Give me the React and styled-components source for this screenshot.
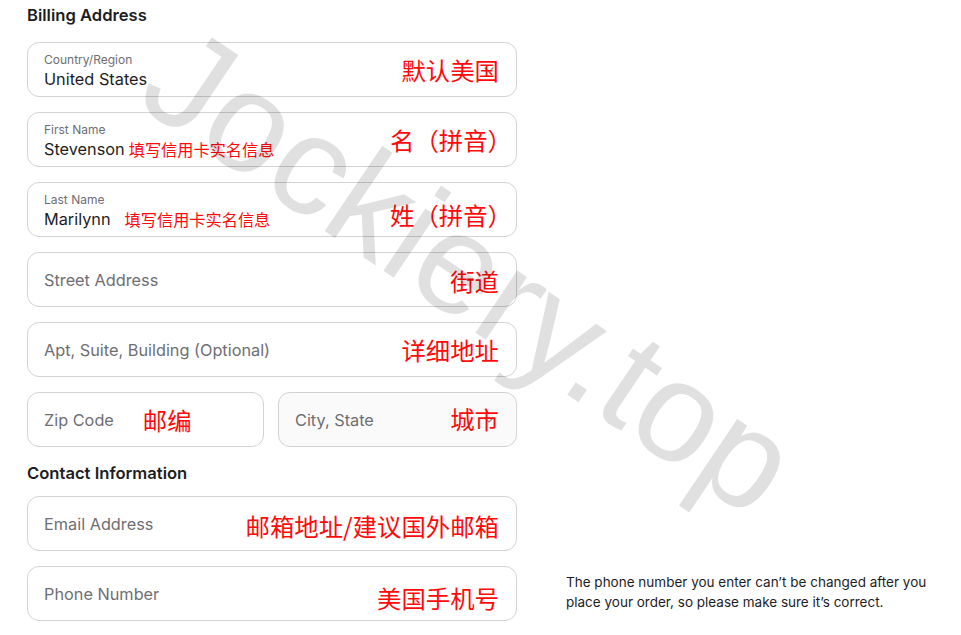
import React from 'react'
import styled, { createGlobalStyle } from 'styled-components'

const GlobalStyle = createGlobalStyle`
body {
    margin: 0;
    background: #fff;
    font-family: Inter, "Liberation Sans", sans-serif;
    color: #1d1d1f;
}
`

const Chevron = () => (
    <ChevronSvg viewBox="0 0 10 6" width="10" height="6">
        <path d="M1 1l4 4 4-4" fill="none" stroke="#86868b" strokeWidth="1.3" strokeLinecap="round" strokeLinejoin="round" />
    </ChevronSvg>
)

const App = () => {
    return (
        <Page>
            <GlobalStyle />
            <Title $after={16}>Billing Address</Title>
            <Stack>
                <Field>
                    <Content>
                        <Label>Country/Region</Label>
                        <Value>United States</Value>
                    </Content>
                    <Chevron />
                    <Note>默认美国</Note>
                </Field>
                <Field>
                    <Content>
                        <Label>First Name</Label>
                        <Value>Stevenson<SmallNote $gap={4}>填写信用卡实名信息</SmallNote></Value>
                    </Content>
                    <Note $dy={0} $tight>名（拼音）</Note>
                </Field>
                <Field>
                    <Content>
                        <Label>Last Name</Label>
                        <Value>Marilynn<SmallNote $gap={14}>填写信用卡实名信息</SmallNote></Value>
                    </Content>
                    <Note $dy={5} $tight>姓（拼音）</Note>
                </Field>
                <Field>
                    <Placeholder>Street Address</Placeholder>
                    <Note $dy={1}>街道</Note>
                </Field>
                <Field>
                    <Placeholder>Apt, Suite, Building (Optional)</Placeholder>
                    <Note>详细地址</Note>
                </Field>
                <Pair>
                    <Field>
                        <Placeholder>Zip Code</Placeholder>
                        <Note $inline>邮编</Note>
                    </Field>
                    <Field $muted>
                        <Placeholder>City, State</Placeholder>
                        <Chevron />
                        <Note $dy={-1}>城市</Note>
                    </Field>
                </Pair>
            </Stack>

            <Title $before={15} $after={12}>Contact Information</Title>
            <Stack>
                <Row>
                    <Field>
                        <Placeholder>Email Address</Placeholder>
                        <Note $dy={2}>邮箱地址/建议国外邮箱</Note>
                    </Field>
                </Row>
                <Row>
                    <Field>
                        <Placeholder>Phone Number</Placeholder>
                        <Note $dy={4}>美国手机号</Note>
                    </Field>
                    <Aside>The phone number you enter can’t be changed after you place your order, so please make sure it’s correct.</Aside>
                </Row>
            </Stack>

            <Watermark>Jockiery.top</Watermark>
        </Page>
    )
}

export default App


const Page = styled.div`
position: relative;
box-sizing: border-box;
min-height: 635px;
padding: 4px 27px 0;
`
const Title = styled.h2`
margin: ${({ $before }) => $before || 0}px 0 ${({ $after }) => $after || 0}px;
font-size: 16.6px;
line-height: 22px;
font-weight: 600;
color: #1d1d1f;
`
const Stack = styled.div`
display: flex;
flex-direction: column;
gap: 15px;
`
const Row = styled.div`
display: grid;
grid-template-columns: 490px 370px;
column-gap: 49px;
align-items: center;
`
const Pair = styled.div`
display: grid;
grid-template-columns: 237px 239px;
column-gap: 14px;
width: 490px;
`
const Field = styled.div`
position: relative;
box-sizing: border-box;
width: 100%;
max-width: 490px;
height: 55px;
display: flex;
align-items: center;
padding: 0 17px 0 16px;
border: 1px solid #d2d2d7;
border-radius: 12px;
background: ${({ $muted }) => $muted ? '#fafafa' : '#fff'};
`
const Content = styled.div`
flex: 1;
display: flex;
flex-direction: column;
justify-content: center;
padding-top: 2px;
`
const Label = styled.div`
font-size: 12px;
line-height: 16px;
color: #6e6e73;
`
const Value = styled.div`
display: flex;
align-items: center;
font-size: 16.3px;
line-height: 22px;
color: #1d1d1f;
`
const Placeholder = styled.div`
font-size: 16.3px;
line-height: 22px;
color: #6e6e73;
`
const Note = styled.span`
position: relative;
margin-left: ${({ $inline }) => $inline ? '29px' : 'auto'};
margin-right: ${({ $tight }) => $tight ? '-13px' : '0'};
transform: translateY(${({ $dy }) => $dy || 0}px);
font-family: "Noto Sans CJK SC", sans-serif;
font-size: 24.4px;
line-height: 30px;
color: #ff0a0a;
`
const SmallNote = styled.span`
margin-left: ${({ $gap }) => $gap}px;
font-family: "Noto Sans CJK SC", sans-serif;
font-size: 16.2px;
line-height: 22px;
color: #ff0a0a;
`
const ChevronSvg = styled.svg`
position: absolute;
right: 22px;
top: 50%;
margin-top: -3px;
`
const Aside = styled.p`
margin: 0 0 4px;
font-size: 13.5px;
line-height: 20px;
color: #1d1d1f;
`
const Watermark = styled.span`
position: absolute;
left: 133px;
top: -18px;
transform-origin: 0 121px;
transform: rotate(34deg);
font-family: "Liberation Sans", sans-serif;
font-size: 142px;
line-height: 1;
white-space: nowrap;
color: rgba(0, 0, 0, 0.12);
pointer-events: none;
`
